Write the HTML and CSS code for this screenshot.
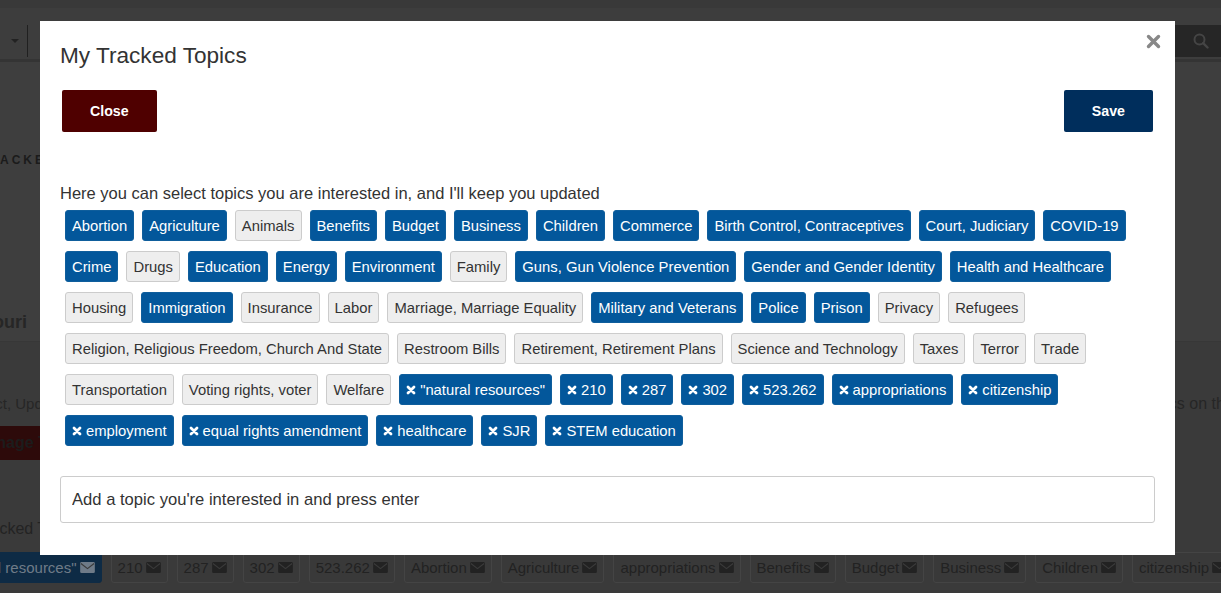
FILE: index.html
```html
<!DOCTYPE html>
<html lang="en">
<head>
    <meta charset="UTF-8">
    <meta name="viewport" content="width=device-width, initial-scale=1.0">
    <title>My Tracked Topics</title>
    <link rel="stylesheet" href="styles.css">
</head>
<body>
    <svg class="sprites" xmlns="http://www.w3.org/2000/svg">
        <symbol id="ic-x" viewBox="0 0 10 10">
            <path d="M2 2l6 6M8 2l-6 6" stroke="currentColor" stroke-width="2.8" stroke-linecap="round" fill="none"/>
        </symbol>
        <symbol id="ic-mail" viewBox="0 0 16 12">
            <rect x="0" y="0" width="16" height="12" rx="1.5" fill="currentColor"/>
            <path d="M0.8 1.6 8 7.2 15.2 1.6" fill="none" stroke="#3a3a3a" stroke-width="1.3"/>
        </symbol>
    </svg>

    <!-- page behind the dialog, dimmed -->
    <div class="page">
        <header class="topbar">
            <div class="topbar-select"><span class="caret"></span></div>
            <div class="topbar-search">
                <svg width="16" height="16" viewBox="0 0 16 16"><circle cx="6.5" cy="6.5" r="5" fill="none" stroke="currentColor" stroke-width="2"/><path d="M10.2 10.2 14.5 14.5" stroke="currentColor" stroke-width="2.4" stroke-linecap="round"/></svg>
            </div>
        </header>

        <section class="hero">
            <h2 class="hero-kicker">TRACKED TOPICS</h2>
            <div class="hero-state">Missouri</div>
        </section>

        <section class="tracked">
            <p class="tracked-intro">
                <span class="intro-start"><span>Pick a subject, Updated</span></span>
                <span class="intro-end"><span>topics on this page</span></span>
            </p>
            <div class="manage-wrap"><span class="manage-btn">Manage Tracked</span></div>
            <p class="tracked-label">Tracked Topics</p>
            <div class="tracked-tags">
                <span class="ptag ptag-own">"natural resources"<svg class="mail"><use href="#ic-mail"/></svg></span>
                <span class="ptag">210<svg class="mail"><use href="#ic-mail"/></svg></span>
                <span class="ptag">287<svg class="mail"><use href="#ic-mail"/></svg></span>
                <span class="ptag">302<svg class="mail"><use href="#ic-mail"/></svg></span>
                <span class="ptag">523.262<svg class="mail"><use href="#ic-mail"/></svg></span>
                <span class="ptag">Abortion<svg class="mail"><use href="#ic-mail"/></svg></span>
                <span class="ptag">Agriculture<svg class="mail"><use href="#ic-mail"/></svg></span>
                <span class="ptag">appropriations<svg class="mail"><use href="#ic-mail"/></svg></span>
                <span class="ptag">Benefits<svg class="mail"><use href="#ic-mail"/></svg></span>
                <span class="ptag">Budget<svg class="mail"><use href="#ic-mail"/></svg></span>
                <span class="ptag">Business<svg class="mail"><use href="#ic-mail"/></svg></span>
                <span class="ptag">Children<svg class="mail"><use href="#ic-mail"/></svg></span>
                <span class="ptag">citizenship<svg class="mail"><use href="#ic-mail"/></svg></span>
            </div>
        </section>
    </div>

    <div class="modal">
        <h1 class="modal-title">My Tracked Topics</h1>
        <span class="modal-x" title="Close">
            <svg width="15" height="15" viewBox="0 0 15 15"><path d="M2.5 2.5l10 10M12.5 2.5l-10 10" stroke="currentColor" stroke-width="3.4" stroke-linecap="round"/></svg>
        </span>

        <div class="modal-actions">
            <button class="btn btn-close">Close</button>
            <button class="btn btn-save">Save</button>
        </div>

        <p class="modal-intro">Here you can select topics you are interested in, and I'll keep you updated</p>

        <div class="topics">
            <div class="topic-row">
                <span class="tag on">Abortion</span>
                <span class="tag on">Agriculture</span>
                <span class="tag">Animals</span>
                <span class="tag on">Benefits</span>
                <span class="tag on">Budget</span>
                <span class="tag on">Business</span>
                <span class="tag on">Children</span>
                <span class="tag on">Commerce</span>
                <span class="tag on">Birth Control, Contraceptives</span>
                <span class="tag on">Court, Judiciary</span>
                <span class="tag on">COVID-19</span>
            </div>
            <div class="topic-row">
                <span class="tag on">Crime</span>
                <span class="tag">Drugs</span>
                <span class="tag on">Education</span>
                <span class="tag on">Energy</span>
                <span class="tag on">Environment</span>
                <span class="tag">Family</span>
                <span class="tag on">Guns, Gun Violence Prevention</span>
                <span class="tag on">Gender and Gender Identity</span>
                <span class="tag on">Health and Healthcare</span>
            </div>
            <div class="topic-row">
                <span class="tag">Housing</span>
                <span class="tag on">Immigration</span>
                <span class="tag">Insurance</span>
                <span class="tag">Labor</span>
                <span class="tag">Marriage, Marriage Equality</span>
                <span class="tag on">Military and Veterans</span>
                <span class="tag on">Police</span>
                <span class="tag on">Prison</span>
                <span class="tag">Privacy</span>
                <span class="tag">Refugees</span>
            </div>
            <div class="topic-row">
                <span class="tag">Religion, Religious Freedom, Church And State</span>
                <span class="tag">Restroom Bills</span>
                <span class="tag">Retirement, Retirement Plans</span>
                <span class="tag">Science and Technology</span>
                <span class="tag">Taxes</span>
                <span class="tag">Terror</span>
                <span class="tag">Trade</span>
            </div>
            <div class="topic-row">
                <span class="tag">Transportation</span>
                <span class="tag">Voting rights, voter</span>
                <span class="tag">Welfare</span>
                <span class="tag on custom"><svg class="x"><use href="#ic-x"/></svg>"natural resources"</span>
                <span class="tag on custom"><svg class="x"><use href="#ic-x"/></svg>210</span>
                <span class="tag on custom"><svg class="x"><use href="#ic-x"/></svg>287</span>
                <span class="tag on custom"><svg class="x"><use href="#ic-x"/></svg>302</span>
                <span class="tag on custom"><svg class="x"><use href="#ic-x"/></svg>523.262</span>
                <span class="tag on custom"><svg class="x"><use href="#ic-x"/></svg>appropriations</span>
                <span class="tag on custom"><svg class="x"><use href="#ic-x"/></svg>citizenship</span>
            </div>
            <div class="topic-row">
                <span class="tag on custom"><svg class="x"><use href="#ic-x"/></svg>employment</span>
                <span class="tag on custom"><svg class="x"><use href="#ic-x"/></svg>equal rights amendment</span>
                <span class="tag on custom"><svg class="x"><use href="#ic-x"/></svg>healthcare</span>
                <span class="tag on custom"><svg class="x"><use href="#ic-x"/></svg>SJR</span>
                <span class="tag on custom"><svg class="x"><use href="#ic-x"/></svg>STEM education</span>
            </div>
        </div>

        <input class="topic-input" type="text" placeholder="Add a topic you're interested in and press enter">
    </div>
</body>
</html>
```

FILE: styles.css
```css
* {
    box-sizing: border-box;
}
html, body {
    margin: 0;
    height: 100%;
}
body {
    font-family: "Liberation Sans", Arial, sans-serif;
    background: #3a3a3a;
    overflow: hidden;
    position: relative;
}
.sprites {
    display: none;
}

/* dimmed page */
.page {
    color: #232323;
}
.topbar {
    height: 62px;
    padding: 25px 0 2px;
    display: flex;
    justify-content: space-between;
    background: linear-gradient(#393939 0, #393939 8px, #3d3d3d 8px);
    border-bottom: 3px solid #343434;
}
.topbar-select {
    width: 28px;
    border-right: 1px solid #202020;
    display: flex;
    align-items: center;
    justify-content: flex-end;
    padding-right: 8px;
}
.caret {
    width: 0;
    height: 0;
    border-left: 4px solid transparent;
    border-right: 4px solid transparent;
    border-top: 4px solid #222;
}
.topbar-search {
    width: 46px;
    background: #262626;
    color: #454545;
    display: flex;
    align-items: center;
    padding-left: 18px;
}
.hero {
    height: 280px;
    background: #3e3e3e;
    border-bottom: 1px solid #373737;
    padding-top: 89px;
}
.hero-kicker {
    margin: 0;
    font-size: 12px;
    letter-spacing: 3px;
    line-height: 18px;
    color: #1b1b1b;
    text-indent: -22px;
    white-space: nowrap;
}
.hero-state {
    margin-top: 141px;
    font-size: 18px;
    font-weight: bold;
    line-height: 24px;
    color: #262626;
    text-indent: -47px;
    white-space: nowrap;
}
.tracked {
    padding-top: 51px;
}
.tracked-intro {
    margin: 0;
    display: flex;
    justify-content: space-between;
    font-size: 15px;
    line-height: 22px;
    color: #262626;
    white-space: nowrap;
}
.intro-start {
    width: 72px;
    overflow: hidden;
    display: flex;
    justify-content: flex-end;
}
.intro-end {
    width: 78px;
    overflow: hidden;
    font-size: 16px;
}
.manage-wrap {
    margin-top: 11px;
    white-space: nowrap;
}
.manage-btn {
    display: inline-block;
    margin-left: -40px;
    padding: 0 14px;
    height: 34px;
    line-height: 34px;
    background: #2d0a0a;
    color: #1c1c1c;
    font-weight: bold;
    font-size: 16px;
}
.tracked-label {
    margin: 58px 0 0;
    font-size: 16px;
    line-height: 22px;
    text-indent: -24px;
    white-space: nowrap;
}
.tracked-tags {
    margin-top: 12px;
    margin-left: -57px;
    display: flex;
    gap: 9px;
    white-space: nowrap;
}
.ptag {
    display: inline-flex;
    align-items: center;
    gap: 3px;
    height: 31px;
    padding: 0 6px;
    border: 1px solid #444;
    border-radius: 3px;
    background: #393939;
    color: #222;
    font-size: 15px;
}
.ptag-own {
    background: #0e2b45;
    border-color: #0e2b45;
    color: #6f7b88;
}
.mail {
    width: 15px;
    height: 11px;
}

/* dialog */
.modal {
    position: absolute;
    left: 40px;
    top: 21px;
    width: 1135px;
    background: #fff;
    padding: 20px 20px 32px;
}
.modal-title {
    margin: 0;
    font-size: 22.6px;
    font-weight: normal;
    line-height: 30px;
    color: #333;
}
.modal-x {
    position: absolute;
    top: 13px;
    right: 14px;
    color: #888;
    cursor: pointer;
}
.modal-actions {
    display: flex;
    justify-content: space-between;
    margin: 19px 2px 0;
}
.btn {
    height: 42px;
    padding: 0 28px;
    border: none;
    border-radius: 2px;
    color: #fff;
    font-family: inherit;
    font-size: 14.2px;
    font-weight: bold;
    cursor: pointer;
}
.btn-close {
    background: #4f0000;
}
.btn-save {
    background: #002e5c;
}
.modal-intro {
    margin: 50px 0 0;
    font-size: 16.5px;
    line-height: 22px;
    color: #333;
}
.topics {
    margin-top: 6px;
    display: flex;
    flex-direction: column;
    gap: 10px;
}
.topic-row {
    display: flex;
    gap: 8px;
    padding-left: 5px;
    white-space: nowrap;
}
.tag {
    display: inline-flex;
    align-items: center;
    height: 31px;
    padding: 0 6px;
    border: 1px solid #ccc;
    border-radius: 3px;
    background: #eee;
    color: #333;
    font-size: 14.8px;
}
.tag.on {
    background: #03579b;
    border-color: #0f5e9c;
    color: #fff;
}
.tag .x {
    width: 10px;
    height: 10px;
    margin-right: 4px;
}
.topic-input {
    display: block;
    width: 100%;
    height: 47px;
    margin-top: 30px;
    padding: 0 11px;
    border: 1px solid #ccc;
    border-radius: 3px;
    font-family: inherit;
    font-size: 16.6px;
    color: #333;
}
.topic-input::placeholder {
    color: #333;
    opacity: 1;
}
```
